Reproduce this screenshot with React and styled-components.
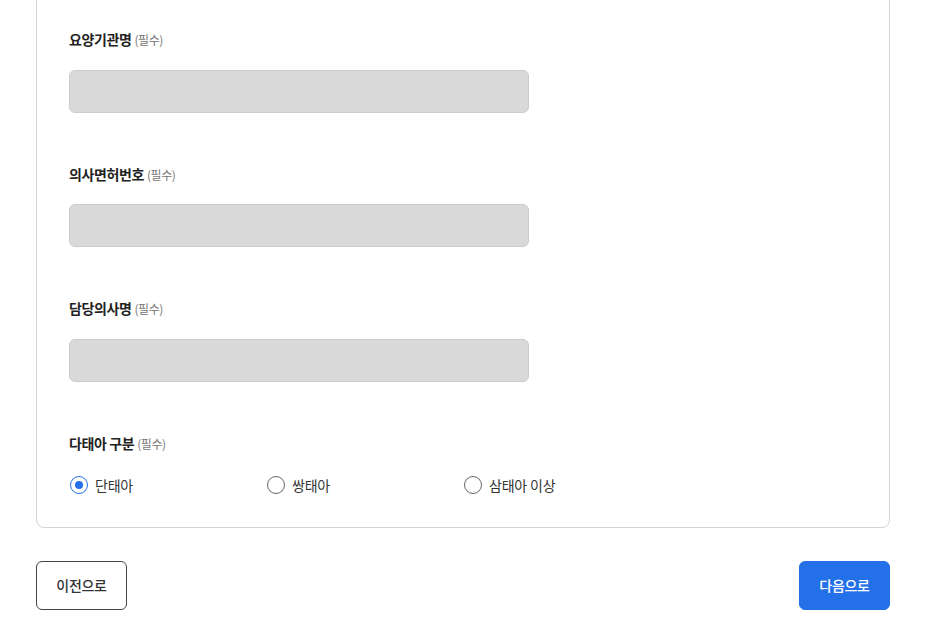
import React, { useState } from "react";
import styled, { createGlobalStyle } from "styled-components";

const Global = createGlobalStyle`
  html, body { margin: 0; padding: 0; background: #fff; }
  body { font-family: "Noto Sans CJK KR", "Noto Sans", sans-serif; color: #222; }
  * { box-sizing: border-box; }
`;

const Page = styled.div`
  padding: 0 62px 0 36px;
  overflow: hidden;
  height: 641px;
`;

const Card = styled.section`
  margin-top: -20px;
  border: 1px solid #d4d4d4;
  border-radius: 8px;
  padding: 48px 32px 32px;
`;

const Field = styled.div`
  margin-bottom: 51px;
`;

const Label = styled.div`
  height: 20px;
  font-size: 14px;
  font-weight: 700;
  line-height: 20px;
  color: #222;
  letter-spacing: -0.4px;
`;

const Req = styled.span`
  font-size: 12px;
  line-height: 1;
  font-weight: 400;
  color: #777;
  margin-left: 3px;
`;

const Input = styled.input`
  display: block;
  margin-top: 20.5px;
  width: 460px;
  height: 43px;
  background: #d9d9d9;
  border: 1px solid #cccccc;
  border-radius: 6px;
  outline: none;
`;

const RadioRow = styled.div`
  display: flex;
  margin-top: 22px;
`;

const RadioItem = styled.label`
  width: 197px;
  height: 20px;
  display: flex;
  align-items: center;
  gap: 7px;
  font-size: 14px;
  line-height: 20px;
  color: #333;
  letter-spacing: -0.2px;
  cursor: pointer;
`;

const Circle = styled.span`
  width: 18px;
  height: 18px;
  margin-left: 1px;
  border-radius: 50%;
  border: 1.5px solid ${(p) => (p.$on ? "#2470e8" : "#666")};
  display: flex;
  align-items: center;
  justify-content: center;
  &::after {
    content: "";
    width: 8px;
    height: 8px;
    border-radius: 50%;
    background: #2470e8;
    display: ${(p) => (p.$on ? "block" : "none")};
  }
`;

const Actions = styled.div`
  display: flex;
  justify-content: space-between;
  margin-top: 33px;
`;

const Button = styled.button`
  width: 91px;
  height: 49px;
  border-radius: 6px;
  font-family: inherit;
  font-size: 14px;
  font-weight: 500;
  letter-spacing: -0.3px;
  cursor: pointer;
  border: ${(p) => (p.$primary ? "1px solid #2470e8" : "1.5px solid #444")};
  background: ${(p) => (p.$primary ? "#2470e8" : "#fff")};
  color: ${(p) => (p.$primary ? "#fff" : "#333")};
`;

const fields = ["요양기관명", "의사면허번호", "담당의사명"];
const options = ["단태아", "쌍태아", "삼태아 이상"];

export default function App() {
  const [sel, setSel] = useState(0);
  return (
    <>
      <Global />
      <Page>
        <Card>
          {fields.map((f) => (
            <Field key={f}>
              <Label>
                {f}
                <Req>(필수)</Req>
              </Label>
              <Input />
            </Field>
          ))}
          <Label>
            다태아 구분<Req>(필수)</Req>
          </Label>
          <RadioRow>
            {options.map((o, i) => (
              <RadioItem key={o} onClick={() => setSel(i)}>
                <Circle $on={sel === i} />
                {o}
              </RadioItem>
            ))}
          </RadioRow>
        </Card>
        <Actions>
          <Button>이전으로</Button>
          <Button $primary>다음으로</Button>
        </Actions>
      </Page>
    </>
  );
}
